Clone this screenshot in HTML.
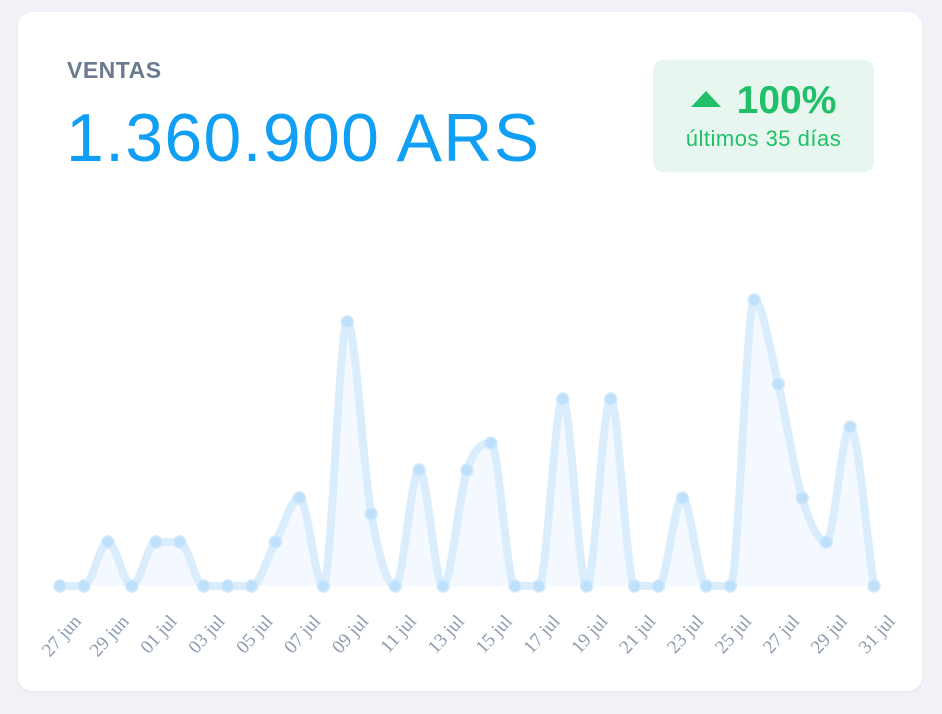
<!DOCTYPE html>
<html><head><meta charset="utf-8">
<style>
html,body{margin:0;padding:0;background:#f0f2f7;width:942px;height:714px;overflow:hidden}
.card{position:absolute;left:18px;top:12px;width:904px;height:679px;background:#fff;border-radius:14px;box-shadow:0 1px 3px rgba(0,0,0,.06)}
.t{position:absolute;left:67px;top:57px;font:bold 23px "Liberation Sans",sans-serif;color:#6b7a90;letter-spacing:0.5px}
.big{position:absolute;left:66px;top:99px;font:68px "Liberation Sans",sans-serif;color:#109ff5;letter-spacing:1.3px;white-space:nowrap}
.badge{position:absolute;left:653px;top:60px;width:221px;height:112px;background:#e7f6ee;border-radius:10px;text-align:center;color:#21bf68;font-family:"Liberation Sans",sans-serif}
.p{position:absolute;left:0;right:0;top:18px;font-weight:bold;font-size:39px;line-height:46px;white-space:nowrap}
.p .tri{display:inline-block;width:0;height:0;border-left:15px solid transparent;border-right:15px solid transparent;border-bottom:16px solid #21bf68;margin-right:16px;vertical-align:6px}
.s{position:absolute;left:0;right:0;top:66px;font-size:22px;letter-spacing:0.5px}
svg{position:absolute;left:0;top:0}
</style></head><body>
<div class="card"></div>
<div class="t">VENTAS</div>
<div class="big">1.360.900 ARS</div>
<div class="badge"><div class="p"><span class="tri"></span>100%</div><div class="s">últimos 35 días</div></div>
<svg id="c" width="942" height="714"></svg>
<script>
var ys=[586,586,542,586,542,542,586,586,586,542,498,586,322,514,586,470,586,470,443,586,586,399,586,399,586,586,498,586,586,300,384,498,542,427,586];
var n=ys.length,x0=60,st=(874-60)/34,xs=ys.map((_,i)=>x0+i*st);
var d=[],m=[];for(var i=0;i<n-1;i++)d.push((ys[i+1]-ys[i])/st);
for(i=0;i<n;i++){if(i==0)m.push(d[0]);else if(i==n-1)m.push(d[n-2]);else m.push(d[i-1]*d[i]<=0?0:(d[i-1]+d[i])/2);}
for(i=0;i<n-1;i++){if(d[i]==0){m[i]=0;m[i+1]=0;continue;}var a=m[i]/d[i],b=m[i+1]/d[i],h=a*a+b*b;if(h>9){var t=3/Math.sqrt(h);m[i]=t*a*d[i];m[i+1]=t*b*d[i];}}
var p="M"+xs[0]+","+ys[0];
for(i=0;i<n-1;i++){var dx=st/3;p+=" C"+(xs[i]+dx)+","+(ys[i]+m[i]*dx)+" "+(xs[i+1]-dx)+","+(ys[i+1]-m[i+1]*dx)+" "+xs[i+1]+","+ys[i+1];}
var s='<path d="'+p+' L874,586 L60,586Z" fill="#f3f9fe"/><path d="'+p+'" fill="none" stroke="#d9edfd" stroke-width="8" stroke-linejoin="round"/>';
for(i=0;i<n;i++)s+='<circle cx="'+xs[i]+'" cy="'+ys[i]+'" r="6" fill="#bfe0fb" stroke="#d2e9fc" stroke-width="1.5"/>';
var lb=["27 jun","29 jun","01 jul","03 jul","05 jul","07 jul","09 jul","11 jul","13 jul","15 jul","17 jul","19 jul","21 jul","23 jul","25 jul","27 jul","29 jul","31 jul"];
for(i=0;i<lb.length;i++){var x=xs[i*2]+22,y=622;s+='<text x="'+x+'" y="'+y+'" transform="rotate(-48 '+x+' '+y+')" text-anchor="end" font-family="Liberation Serif,serif" font-size="19" fill="#8c9bb0">'+lb[i]+'</text>';}
document.getElementById('c').innerHTML=s;
</script>
</body></html>
